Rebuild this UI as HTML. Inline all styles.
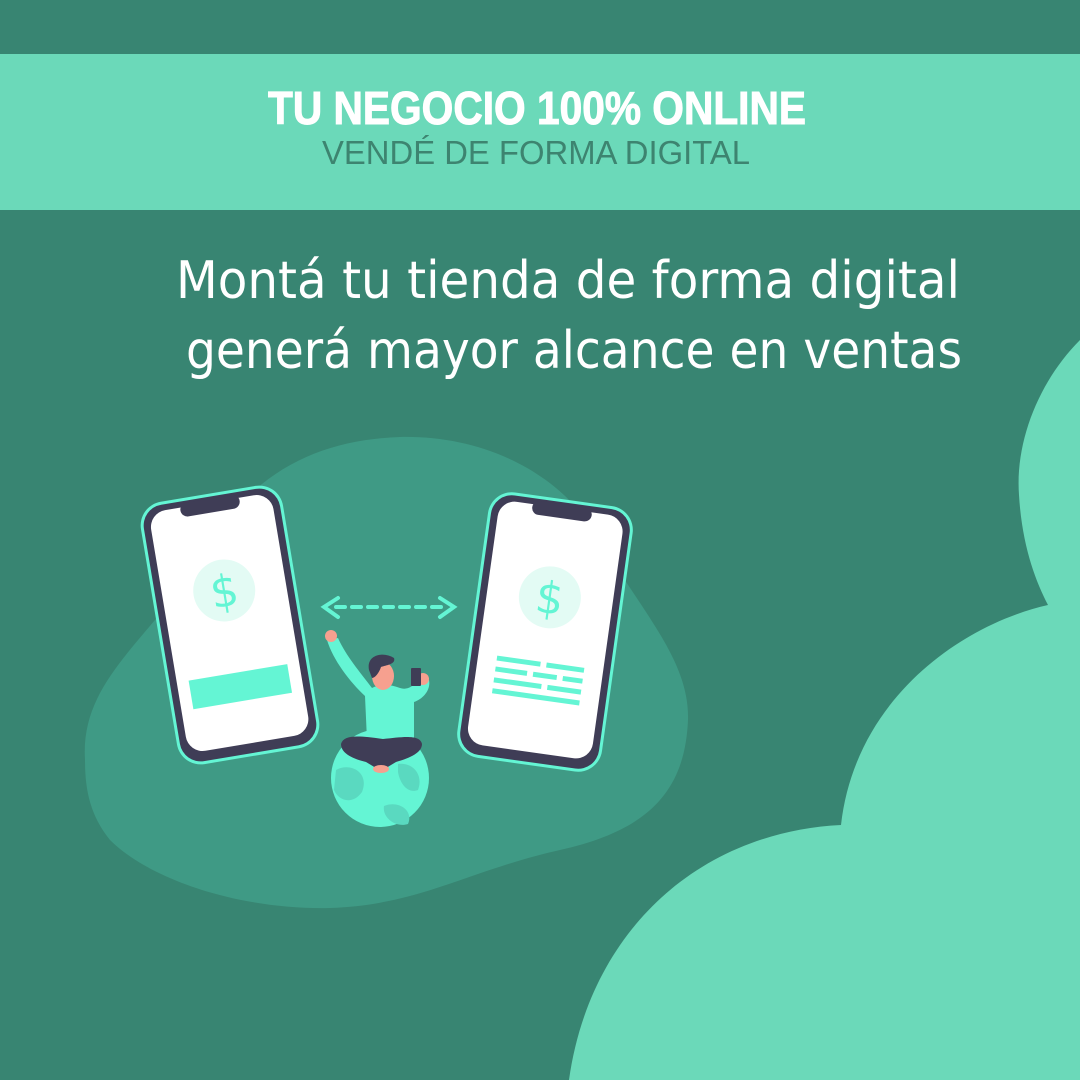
<!DOCTYPE html>
<html><head><meta charset="utf-8"><style>
html,body{margin:0;padding:0;width:1080px;height:1080px;overflow:hidden;background:#388572}
svg{display:block}
</style></head><body>
<svg width="1080" height="1080" viewBox="0 0 1080 1080" xmlns="http://www.w3.org/2000/svg">
<rect width="1080" height="1080" fill="#388572"/>
<rect x="0" y="54" width="1080" height="156" fill="#6bd9b9"/>
<text x="268" y="124" font-family="Liberation Sans, sans-serif" font-weight="bold" font-size="46" fill="#fff" stroke="#fff" stroke-width="1" textLength="538" lengthAdjust="spacingAndGlyphs">TU NEGOCIO 100% ONLINE</text>
<text x="322" y="164" font-family="Liberation Sans, sans-serif" font-size="33" fill="#3d8470" textLength="428" lengthAdjust="spacingAndGlyphs">VENDÉ DE FORMA DIGITAL</text>
<text x="176" y="298" font-family="DejaVu Sans, Liberation Sans, sans-serif" font-size="52" fill="#fff" textLength="784" lengthAdjust="spacingAndGlyphs">Montá tu tienda de forma digital</text>
<text x="186" y="368" font-family="DejaVu Sans, Liberation Sans, sans-serif" font-size="52" fill="#fff" textLength="776" lengthAdjust="spacingAndGlyphs">generá mayor alcance en ventas</text>
<path d="M1080,340 C1040,380 1015,440 1019,495 C1022,545 1035,580 1048,605 C960,625 855,700 841,825 C700,832 590,930 569,1080 L1080,1080 Z" fill="#6bd9b9"/>
<path d="M85,760 C80,680 150,640 200,560 C250,470 320,440 400,437 C480,435 560,470 600,540 C640,610 690,660 688,720 C685,790 650,830 560,850 C470,870 420,905 330,908 C240,910 150,880 110,840 C90,815 85,790 85,760Z" fill="#3f9a85"/>
<g transform="translate(230,625) rotate(-9.5)">
<rect x="-72" y="-133" width="144" height="266" rx="24" fill="#64f5d4"/>
<rect x="-69" y="-130" width="138" height="260" rx="21" fill="#3f3d56"/>
<rect x="-62" y="-124" width="124" height="244" rx="17" fill="#fff"/>
<rect x="-30" y="-128" width="60" height="14" rx="7" fill="#3f3d56"/>
<circle cx="0" cy="-35" r="31" fill="#e3fbf4"/>
<text x="0" y="-19" text-anchor="middle" font-family="DejaVu Sans, sans-serif" font-size="44" fill="#64f5d4">$</text>
<rect x="-50" y="48" width="100" height="29" fill="#64f5d4"/>
</g>
<g transform="translate(545,632) rotate(8)">
<rect x="-73" y="-134" width="146" height="268" rx="24" fill="#64f5d4"/>
<rect x="-70" y="-131" width="140" height="262" rx="21" fill="#3f3d56"/>
<rect x="-63" y="-125" width="126" height="246" rx="17" fill="#fff"/>
<rect x="-30" y="-129" width="60" height="14" rx="7" fill="#3f3d56"/>
<circle cx="0" cy="-35" r="31" fill="#e3fbf4"/>
<text x="0" y="-19" text-anchor="middle" font-family="DejaVu Sans, sans-serif" font-size="44" fill="#64f5d4">$</text>
<g fill="#64f5d4">
<rect x="-44" y="30" width="44" height="5"/><rect x="6" y="30" width="38" height="5"/>
<rect x="-44" y="41" width="32" height="5"/><rect x="-6" y="41" width="24" height="5"/><rect x="24" y="41" width="20" height="5"/>
<rect x="-44" y="52" width="48" height="5"/><rect x="10" y="52" width="34" height="5"/>
<rect x="-44" y="63" width="88" height="5"/>
</g>
</g>
<g stroke="#64f5d4" stroke-width="4" stroke-linecap="round" fill="none">
<line x1="336" y1="607" x2="442" y2="607" stroke-dasharray="9 7"/>
<polyline points="338,598 324,607 338,617"/>
<polyline points="440,598 454,607 440,617"/>
</g>
<circle cx="380" cy="778" r="49" fill="#64f5d4"/>
<path d="M336,770 C350,762 370,772 362,792 C352,806 338,800 334,790Z M398,764 C412,762 424,774 418,790 C408,794 400,784 398,772Z M384,806 C398,800 414,810 408,824 C396,828 382,818 384,806Z" fill="#5ad9c0"/>
<path d="M327,640 C333,660 350,682 365,696 L367,740 L414,740 L414,702 C423,699 431,690 429,680 L419,678 C413,688 406,690 400,688 C390,684 380,684 372,688 C360,672 346,656 338,638Z" fill="#64f5d4"/>
<circle cx="331" cy="636" r="6" fill="#f6a08f"/>
<circle cx="423" cy="679" r="6" fill="#f6a08f"/>
<rect x="411" y="668" width="10" height="18" rx="1" fill="#3f3d56"/>
<ellipse cx="383" cy="676" rx="11" ry="14" fill="#f6a08f"/>
<path d="M369,670 C366,655 383,651 394,658 C396,664 387,665 381,667 C379,673 375,678 372,678Z" fill="#3f3d56"/>
<path d="M341,744 C344,734 360,736 383,739 C402,737 420,734 422,744 C422,754 406,759 396,762 L381,771 L366,762 C354,759 341,754 341,744Z" fill="#3f3d56"/>
<ellipse cx="381" cy="769" rx="8" ry="4" fill="#f6a08f"/>
</svg>
</body></html>
